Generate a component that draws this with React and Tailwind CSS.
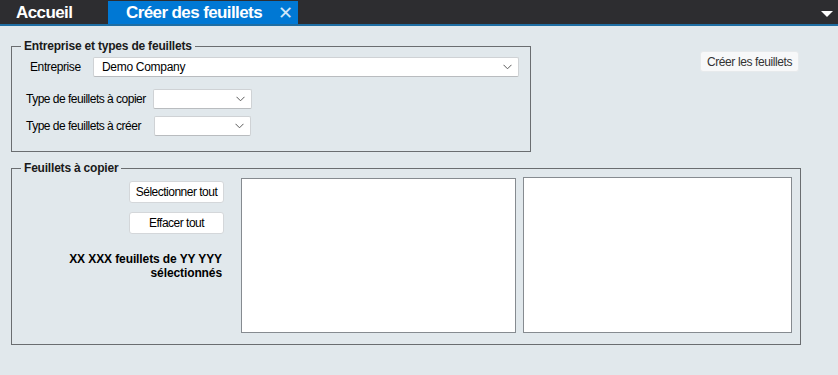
import React from "react";

function Chevron() {
  return (
    <svg width="9" height="6" viewBox="0 0 9 6" className="shrink-0">
      <path d="M0.5 0.8 L4.5 4.8 L8.5 0.8" fill="none" stroke="#5a5a5a" strokeWidth="1" />
    </svg>
  );
}

function Select({ value, className }) {
  return (
    <div className={"flex items-center justify-between bg-white border border-[#cfd2d5] border-b-[#b9bcbf] rounded-[2px] pl-[8px] pr-[6px] h-[20px] " + className}>
      <span className="text-[12px] text-black leading-none tracking-[-0.3px]">{value}</span>
      <Chevron />
    </div>
  );
}

function Btn({ children, className }) {
  return (
    <div className={"flex items-center justify-center bg-white border border-[#d4d7da] rounded-[3px] text-[12px] text-black tracking-[-0.5px] " + className}>
      {children}
    </div>
  );
}

export default function App() {
  return (
    <div className="w-[838px] h-[375px] bg-[#e1e8ec] overflow-hidden" style={{ fontFamily: '"Liberation Sans", Arial, sans-serif' }}>
      <div className="h-[24px] bg-[#2d2d30] flex items-end relative">
        <div className="w-[108px] h-[24px] flex items-center pl-[16px] pt-[1px] text-white text-[17px] font-bold tracking-[-0.6px]">
          Accueil
        </div>
        <div className="w-[190px] h-[23px] bg-[#0078d4] flex items-center pl-[18px] text-white text-[17px] font-bold tracking-[-0.6px]">
          <span>Créer des feuillets</span>
          <span className="ml-[16px] text-[#cfe6f8] text-[18px] font-normal leading-none">✕</span>
        </div>
        <div className="flex-1" />
        <svg width="12" height="7" viewBox="0 0 12 7" className="mr-[5px] mb-[6px]">
          <path d="M0 0 H12 L6 6 Z" fill="#ffffff" />
        </svg>
      </div>
      <div className="h-[2px] bg-[#1f6ea3]" />

      <div className="pl-[11px] pt-[13px]">
        <div className="flex items-start">
          <fieldset className="w-[520px] h-[113px] border border-[#6a6d70] px-0 m-0">
            <legend className="ml-[9px] px-[3px] text-[12px] font-bold text-[#1a1a1a] leading-[14px] tracking-[-0.2px]">
              Entreprise et types de feuillets
            </legend>
            <div className="flex items-center mt-[4px] h-[20px]">
              <span className="ml-[18px] w-[63px] text-[12px] tracking-[-0.4px]">Entreprise</span>
              <Select value="Demo Company" className="w-[426px]" />
            </div>
            <div className="flex items-center mt-[12px] h-[20px]">
              <span className="ml-[14px] w-[127px] text-[12px] tracking-[-0.5px]">Type de feuillets à copier</span>
              <Select value="" className="w-[99px]" />
            </div>
            <div className="flex items-center mt-[7px] h-[20px]">
              <span className="ml-[14px] w-[128px] text-[12px] tracking-[-0.5px]">Type de feuillets à créer</span>
              <Select value="" className="w-[97px]" />
            </div>
          </fieldset>
          <div className="ml-[169px] mt-[12px] w-[99px] h-[21px] flex items-center justify-center bg-[#f7f8f9] border border-[#e7eaec] rounded-[3px] text-[12px] text-[#333] tracking-[-0.4px]">
            Créer les feuillets
          </div>
        </div>

        <fieldset className="mt-[9px] w-[790px] h-[184px] border border-[#6a6d70] m-0 px-0">
          <legend className="ml-[9px] px-[3px] text-[12px] font-bold text-[#1a1a1a] leading-[14px] tracking-[-0.2px]">
            Feuillets à copier
          </legend>
          <div className="flex mt-[3px]">
            <div className="w-[213px] flex flex-col items-end pt-[3px]">
              <Btn className="w-[95px] h-[22px] mr-[1px]">Sélectionner tout</Btn>
              <Btn className="w-[95px] h-[22px] mt-[9px] mr-[1px]">Effacer tout</Btn>
              <div className="mt-[18px] pr-[3px] text-right text-[12px] font-bold leading-[14px] tracking-[-0.1px] text-black">
                XX XXX feuillets de YY YYY
                <br />
                sélectionnés
              </div>
            </div>
            <div className="ml-[16px] w-[275px] h-[155px] bg-white border border-[#868b90]" />
            <div className="ml-[7px] -mt-[1px] w-[269px] h-[156px] bg-white border border-[#868b90]" />
          </div>
        </fieldset>
      </div>
    </div>
  );
}
